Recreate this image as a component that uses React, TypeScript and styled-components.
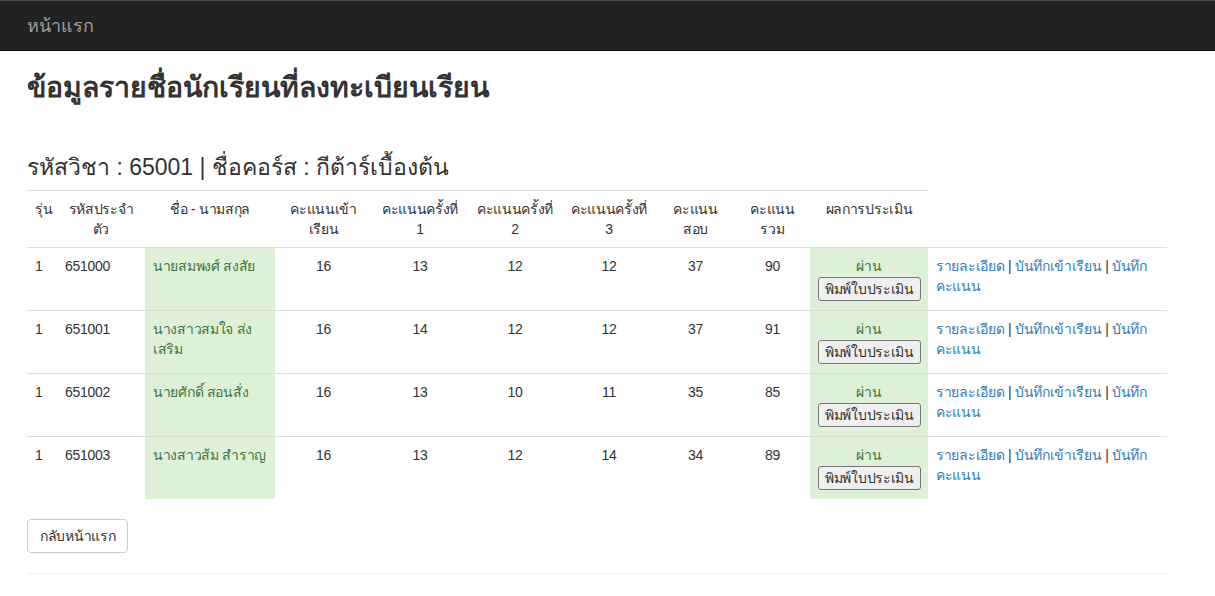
import React from "react";
import styled, { createGlobalStyle } from "styled-components";

const GlobalStyle = createGlobalStyle`
  html, body { margin: 0; padding: 0; background: #fff; }
  body {
    font-family: Tahoma, "Liberation Sans", "DejaVu Sans", sans-serif;
    font-size: 14px;
    line-height: 20px;
    color: #333;
  }
  * { box-sizing: border-box; }
`;

const Navbar = styled.nav`
  height: 51px;
  background: #222;
  border-top: 1px solid #4a4a4a;
  border-bottom: 1px solid #080808;
  margin-bottom: 20px;
  display: flex;
  align-items: center;
`;

const Brand = styled.a`
  margin-left: 27px;
  font-size: 18px;
  line-height: 20px;
  color: #9d9d9d;
  text-decoration: none;
`;

const Container = styled.main`
  width: 1140px;
  margin-left: 27px;
`;

const Title = styled.h2`
  margin: 20px 0 10px;
  font-size: 28.4px;
  line-height: 33px;
  font-weight: 700;
  color: #333;
`;

const SubTitle = styled.h3`
  margin: 20px 0 10px;
  font-size: 23px;
  line-height: 26px;
  font-weight: 400;
  color: #333;
`;

const Spacer = styled.div`
  height: 20px;
`;

const Table = styled.table`
  width: 1140px;
  table-layout: fixed;
  border-collapse: collapse;
  border-spacing: 0;
  margin-bottom: 20px;
  letter-spacing: -0.3px;
`;

const Th = styled.th`
  padding: 8px;
  font-weight: 400;
  text-align: center;
  vertical-align: top;
  border-top: 1px solid #ddd;
  border-bottom: 1px solid #ddd;
`;

const Line = styled.span`
  display: block;
  white-space: nowrap;
`;

const Td = styled.td<{ $align?: string; $success?: boolean }>`
  padding: 8px;
  vertical-align: top;
  text-align: ${(p) => p.$align || "left"};
  border-top: 1px solid #ddd;
  background: ${(p) => (p.$success ? "#dff0d8" : "transparent")};
  color: ${(p) => (p.$success ? "#3c763d" : "#333")};
`;

const PrintButton = styled.button`
  display: inline-block;
  vertical-align: top;
  white-space: nowrap;
  font-family: inherit;
  font-size: 14px;
  line-height: 20px;
  height: 24px;
  letter-spacing: -0.3px;
  color: #333;
  background: #efefef;
  border: 1px solid #767676;
  border-radius: 3px;
  padding: 1px 6px;
  margin: 1px 0;
`;

const Link = styled.a`
  color: #337ab7;
  text-decoration: none;
`;

const BackButton = styled.button`
  font-family: inherit;
  font-size: 14px;
  line-height: 20px;
  letter-spacing: -0.3px;
  color: #333;
  background: #fff;
  border: 1px solid #ccc;
  border-radius: 4px;
  padding: 6px 12px;
  margin: 0;
`;

const Rule = styled.hr`
  margin: 20px 0;
  border: 0;
  border-top: 1px solid #eee;
`;

const colWidths = [30, 88, 130, 97, 96, 94, 94, 79, 75, 118, 239];

const headers: string[][] = [
  ["รุ่น"],
  ["รหัสประจำ", "ตัว"],
  ["ชื่อ - นามสกุล"],
  ["คะแนนเข้า", "เรียน"],
  ["คะแนนครั้งที่", "1"],
  ["คะแนนครั้งที่", "2"],
  ["คะแนนครั้งที่", "3"],
  ["คะแนน", "สอบ"],
  ["คะแนน", "รวม"],
  ["ผลการประเมิน"],
];

const students = [
  { gen: 1, id: "651000", name: ["นายสมพงศ์ สงสัย"], s: [16, 13, 12, 12, 37, 90] },
  { gen: 1, id: "651001", name: ["นางสาวสมใจ ส่ง", "เสริม"], s: [16, 14, 12, 12, 37, 91] },
  { gen: 1, id: "651002", name: ["นายศักดิ์ สอนสั่ง"], s: [16, 13, 10, 11, 35, 85] },
  { gen: 1, id: "651003", name: ["นางสาวส้ม สำราญ"], s: [16, 13, 12, 14, 34, 89] },
];

export default function App() {
  return (
    <>
      <GlobalStyle />
      <Navbar>
        <Brand href="#">หน้าแรก</Brand>
      </Navbar>
      <Container>
        <Title>ข้อมูลรายชื่อนักเรียนที่ลงทะเบียนเรียน</Title>
        <Spacer />
        <SubTitle>รหัสวิชา : 65001 | ชื่อคอร์ส : กีต้าร์เบื้องต้น</SubTitle>
        <Table>
          <colgroup>
            {colWidths.map((w, i) => (
              <col key={i} style={{ width: w }} />
            ))}
          </colgroup>
          <thead>
            <tr>
              {headers.map((h, i) => (
                <Th key={i}>
                  {h.map((l, j) => (
                    <Line key={j}>{l}</Line>
                  ))}
                </Th>
              ))}
            </tr>
          </thead>
          <tbody>
            {students.map((st) => (
              <tr key={st.id}>
                <Td>{st.gen}</Td>
                <Td>{st.id}</Td>
                <Td $success>
                  {st.name.map((l, j) => (
                    <Line key={j}>{l}</Line>
                  ))}
                </Td>
                {st.s.map((v, i) => (
                  <Td key={i} $align="center">
                    {v}
                  </Td>
                ))}
                <Td $success $align="center">
                  ผ่าน
                  <br />
                  <PrintButton>พิมพ์ใบประเมิน</PrintButton>
                </Td>
                <Td>
                  <Line>
                    <Link href="#">รายละเอียด</Link> | <Link href="#">บันทึกเข้าเรียน</Link> |{" "}
                    <Link href="#">บันทึก</Link>
                  </Line>
                  <Line>
                    <Link href="#">คะแนน</Link>
                  </Line>
                </Td>
              </tr>
            ))}
          </tbody>
        </Table>
        <BackButton>กลับหน้าแรก</BackButton>
        <Rule />
      </Container>
    </>
  );
}
